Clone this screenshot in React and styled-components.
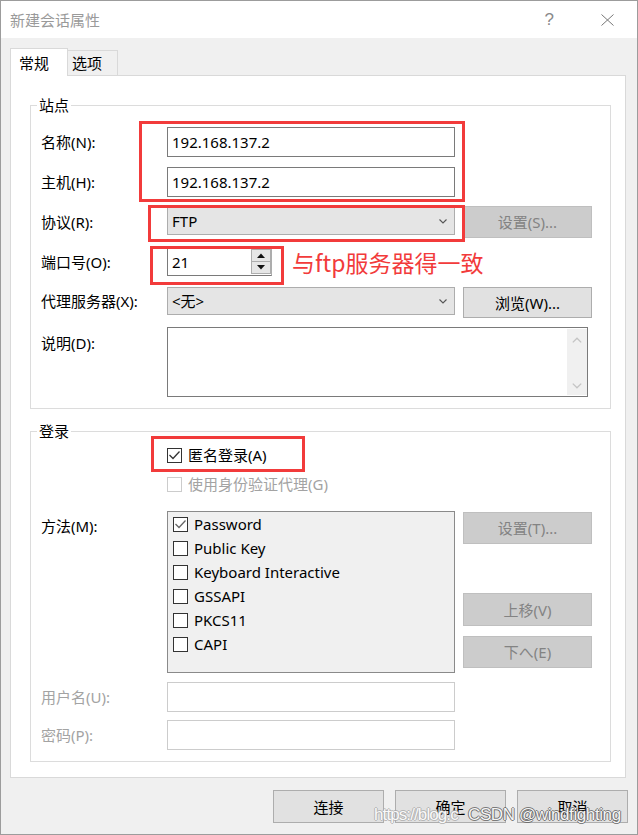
import React from 'react';
import styled, { createGlobalStyle } from 'styled-components';

const GlobalStyle = createGlobalStyle`
  html, body { margin: 0; padding: 0; background: #fff; }
  body {
    font-family: "Noto Sans", "Noto Sans CJK SC", sans-serif;
    font-size: 15px;
    line-height: 20px;
    color: #000;
  }
  * { box-sizing: border-box; }
`;

const Window = styled.div`
  position: relative;
  width: 638px;
  height: 835px;
  border: 1px solid #9c9c9c;
  background: #f0f0f0;
  display: flex;
  flex-direction: column;
  overflow: hidden;
`;

const TitleBar = styled.div`
  flex: none;
  height: 37px;
  background: #fff;
  display: flex;
  align-items: center;
  padding: 0 23px 0 9px;
`;

const TitleText = styled.div`
  flex: 1;
  color: #9a9a9a;
  font-size: 15px;
`;

const HelpMark = styled.span`
  color: #8a8a8a;
  font-family: "Liberation Sans", sans-serif;
  font-size: 17px;
  margin-right: 47px;
`;

const Body = styled.div`
  flex: 1;
  display: flex;
  flex-direction: column;
  padding: 10px 9px 0 9px;
`;

const TabRow = styled.div`
  display: flex;
  align-items: flex-end;
  height: 27px;
`;

const Tab = styled.div`
  position: relative;
  z-index: ${p => (p.$active ? 2 : 1)};
  height: ${p => (p.$active ? 28 : 25)}px;
  width: ${p => (p.$active ? 58 : 51)}px;
  margin-bottom: ${p => (p.$active ? -1 : 0)}px;
  margin-left: ${p => (p.$active ? 0 : -1)}px;
  padding-left: ${p => (p.$active ? 8 : 4)}px;
  border: 1px solid #d9d9d9;
  border-bottom: none;
  background: ${p => (p.$active ? '#fff' : '#f0f0f0')};
  display: flex;
  align-items: center;
`;

const Panel = styled.div`
  width: 616px;
  height: 703px;
  border: 1px solid #d9d9d9;
  background: #fff;
  padding: 29px 0 15px 19px;
  display: flex;
  flex-direction: column;
  gap: 22px;
`;

const Group = styled.div`
  position: relative;
  width: 581px;
  border: 1px solid #dcdcdc;
  padding: 0 18px 11px 10px;
  display: flex;
  flex-direction: column;
`;

const Legend = styled.div`
  align-self: flex-start;
  margin: -11px 0 0 -4px;
  padding: 0 2px;
  background: #fff;
  line-height: 20px;
`;

const Row = styled.div`
  display: grid;
  grid-template-columns: 118px 288px 129px;
  column-gap: 8px;
  height: ${p => p.$h}px;
  margin-top: ${p => p.$mt}px;
  align-items: ${p => p.$align || 'center'};
`;

const Label = styled.div`
  white-space: nowrap;
  color: ${p => (p.$disabled ? '#a3a3a3' : '#000')};
  padding-top: ${p => p.$pt || 0}px;
`;

const TextField = styled.input`
  width: 100%;
  height: ${p => p.$h}px;
  border: 1px solid ${p => (p.$disabled ? '#cccccc' : '#7a7a7a')};
  background: #fff;
  padding: 0 4px;
  margin: 0;
  font: inherit;
  color: #000;
  outline: none;
`;

const Select = styled.div`
  width: 100%;
  height: ${p => p.$h}px;
  margin-top: ${p => p.$mt || 0}px;
  border: 1px solid #adadad;
  background: #e5e5e5;
  display: flex;
  align-items: center;
  justify-content: space-between;
  padding: 0 7px 0 4px;
`;

const Button = styled.button`
  width: ${p => p.$w || 129}px;
  height: ${p => p.$h}px;
  margin: 0;
  padding: 0;
  font: inherit;
  line-height: 20px;
  border: 1px solid ${p => (p.$disabled ? '#bfbfbf' : '#adadad')};
  background: ${p => (p.$disabled ? '#cccccc' : '#e1e1e1')};
  color: ${p => (p.$disabled ? '#838383' : '#000')};
`;

const Span2 = styled.div`
  grid-column: 2 / 4;
  display: flex;
  align-items: center;
`;

const SpinBox = styled.div`
  width: 105px;
  height: 29px;
  border: 1px solid #7a7a7a;
  border-right-color: #adadad;
  background: #fff;
  display: flex;
`;

const SpinText = styled.div`
  flex: 1;
  padding-left: 4px;
  display: flex;
  align-items: center;
`;

const SpinButtons = styled.div`
  width: 20px;
  display: flex;
  flex-direction: column;
  padding: 1px 0;
`;

const SpinButton = styled.div`
  flex: 1;
  border: 1px solid #adadad;
  margin-top: ${p => (p.$down ? -1 : 0)}px;
  background: #e6e6e6;
  display: flex;
  align-items: center;
  justify-content: center;
`;

const Annotation = styled.div`
  margin-left: 20px;
  color: #f23b3b;
  font-family: "Noto Sans CJK SC", sans-serif;
  font-size: 23px;
  line-height: 26px;
  white-space: nowrap;
`;

const TextArea = styled.div`
  grid-column: 2 / 4;
  width: 421px;
  height: 70px;
  border: 1px solid #7a7a7a;
  background: #fff;
  display: flex;
  justify-content: flex-end;
  padding: 1px 0 1px 0;
`;

const ScrollTrack = styled.div`
  width: 20px;
  background: #f0f0f0;
  display: flex;
  flex-direction: column;
  justify-content: space-between;
  align-items: center;
  padding: 8px 0 6px;
`;

const RedBox = styled.div`
  position: absolute;
  left: ${p => p.$x}px;
  top: ${p => p.$y}px;
  width: ${p => p.$w}px;
  height: ${p => p.$hh}px;
  border: 3px solid #f23b3b;
  pointer-events: none;
`;

const CheckRow = styled.div`
  display: flex;
  align-items: center;
  gap: 6px;
  height: ${p => p.$h || 22}px;
  color: ${p => (p.$disabled ? '#a3a3a3' : '#000')};
  white-space: nowrap;
`;

const Box = styled.span`
  flex: none;
  width: 15px;
  height: 15px;
  border: 1px solid ${p => (p.$disabled ? '#cccccc' : '#333')};
  background: #fff;
  display: inline-flex;
  align-items: center;
  justify-content: center;
`;

const ListBox = styled.div`
  width: 288px;
  height: 162px;
  border: 1px solid #8a8a8a;
  background: #f0f0f0;
  padding: 0 0 0 5px;
  display: flex;
  flex-direction: column;
`;

const ButtonStack = styled.div`
  display: flex;
  flex-direction: column;
  padding-top: 1px;
`;

const Gap = styled.div`
  height: ${p => p.$h}px;
`;

const Footer = styled.div`
  display: flex;
  justify-content: flex-end;
  gap: 11px;
  margin-top: 12px;
`;

const Watermark = styled.div`
  position: absolute;
  left: 373px;
  top: 804px;
  display: flex;
  font-family: "Liberation Sans", sans-serif;
  font-size: 17px;
  line-height: 20px;
  white-space: nowrap;
  pointer-events: none;
`;

const WaterUrl = styled.span`
  width: 94px;
  letter-spacing: -0.9px;
  color: rgba(255, 255, 255, 0.95);
  text-shadow: 1px 0 rgba(170, 170, 170, 0.8), -1px 0 rgba(170, 170, 170, 0.8),
    0 1px rgba(170, 170, 170, 0.8), 0 -1px rgba(170, 170, 170, 0.8);
`;

const WaterName = styled.span`
  color: rgba(255, 255, 255, 0.95);
  letter-spacing: -0.4px;
  text-shadow: 1px 0 rgba(90, 90, 90, 0.75), -1px 0 rgba(90, 90, 90, 0.75),
    0 1px rgba(90, 90, 90, 0.75), 0 -1px rgba(90, 90, 90, 0.75);
`;

const Chevron = ({ up, color = '#555', w = 8, h = 5 }) => (
  <svg width={w} height={h} viewBox="0 0 8 5">
    <path
      d={up ? 'M0.5 4.5 L4 1 L7.5 4.5' : 'M0.5 0.5 L4 4 L7.5 0.5'}
      fill="none"
      stroke={color}
      strokeWidth="1.1"
    />
  </svg>
);

const Tri = ({ up }) => (
  <svg width="8" height="5" viewBox="0 0 8 5">
    <path d={up ? 'M0 5 L4 0.5 L8 5 Z' : 'M0 0 L4 4.5 L8 0 Z'} fill="#111" />
  </svg>
);

const Check = ({ color = '#333' }) => (
  <svg width="13" height="13" viewBox="0 0 13 13">
    <path d="M1.5 6 L5 9.5 L11.5 2.5" fill="none" stroke={color} strokeWidth="1.3" />
  </svg>
);

const CheckItem = ({ checked, disabled, children, h, color }) => (
  <CheckRow $disabled={disabled} $h={h}>
    <Box $disabled={disabled}>{checked && <Check color={color} />}</Box>
    <span>{children}</span>
  </CheckRow>
);

const methods = [
  { name: 'Password', checked: true },
  { name: 'Public Key' },
  { name: 'Keyboard Interactive' },
  { name: 'GSSAPI' },
  { name: 'PKCS11' },
  { name: 'CAPI' },
];

export default function App() {
  return (
    <>
      <GlobalStyle />
      <Window>
        <TitleBar>
          <TitleText>新建会话属性</TitleText>
          <HelpMark>?</HelpMark>
          <svg width="13" height="12" viewBox="0 0 13 12">
            <path d="M0.5 0.5 L12.5 11.5 M12.5 0.5 L0.5 11.5" stroke="#777" strokeWidth="1" fill="none" />
          </svg>
        </TitleBar>
        <Body>
          <TabRow>
            <Tab $active>常规</Tab>
            <Tab>选项</Tab>
          </TabRow>
          <Panel>
            <Group>
              <Legend>站点</Legend>
              <Row $h={30} $mt={12}>
                <Label>名称(N):</Label>
                <TextField $h={30} value="192.168.137.2" readOnly />
              </Row>
              <Row $h={30} $mt={10}>
                <Label>主机(H):</Label>
                <TextField $h={30} value="192.168.137.2" readOnly />
              </Row>
              <Row $h={32} $mt={9} $align="start">
                <Label $pt={6}>协议(R):</Label>
                <Select $h={28} $mt={1}>
                  <span>FTP</span>
                  <Chevron />
                </Select>
                <Button $h={32} $disabled>设置(S)...</Button>
              </Row>
              <Row $h={31} $mt={8}>
                <Label>端口号(O):</Label>
                <Span2>
                  <SpinBox>
                    <SpinText>21</SpinText>
                    <SpinButtons>
                      <SpinButton><Tri up /></SpinButton>
                      <SpinButton $down><Tri /></SpinButton>
                    </SpinButtons>
                  </SpinBox>
                  <Annotation>与ftp服务器得一致</Annotation>
                </Span2>
              </Row>
              <Row $h={31} $mt={10} $align="start">
                <Label $pt={4}>代理服务器(X):</Label>
                <Select $h={28}>
                  <span>&lt;无&gt;</span>
                  <Chevron />
                </Select>
                <Button $h={31}>浏览(W)...</Button>
              </Row>
              <Row $h={70} $mt={9} $align="start">
                <Label $pt={6}>说明(D):</Label>
                <TextArea>
                  <ScrollTrack>
                    <Chevron up color="#c4c4c4" w={10} h={6} />
                    <Chevron color="#c4c4c4" w={10} h={6} />
                  </ScrollTrack>
                </TextArea>
              </Row>
              <RedBox $x={108} $y={15} $w={326} $hh={81} />
              <RedBox $x={117} $y={99} $w={317} $hh={37} />
              <RedBox $x={119} $y={140} $w={134} $hh={39} />
            </Group>

            <Group>
              <Legend>登录</Legend>
              <Row $h={22} $mt={3}>
                <span />
                <CheckItem checked color="#333">匿名登录(A)</CheckItem>
              </Row>
              <Row $h={22} $mt={7}>
                <span />
                <CheckItem disabled>使用身份验证代理(G)</CheckItem>
              </Row>
              <Row $h={162} $mt={16} $align="start">
                <Label $pt={5}>方法(M):</Label>
                <ListBox>
                  {methods.map(m => (
                    <CheckItem key={m.name} checked={m.checked} h={24} color="#666">
                      {m.name}
                    </CheckItem>
                  ))}
                </ListBox>
                <ButtonStack>
                  <Button $h={32} $disabled>设置(T)...</Button>
                  <Gap $h={49} />
                  <Button $h={33} $disabled>上移(V)</Button>
                  <Gap $h={10} />
                  <Button $h={32} $disabled>下へ(E)</Button>
                </ButtonStack>
              </Row>
              <Row $h={30} $mt={9}>
                <Label $disabled>用户名(U):</Label>
                <TextField $h={30} $disabled readOnly value="" />
              </Row>
              <Row $h={30} $mt={8}>
                <Label $disabled>密码(P):</Label>
                <TextField $h={30} $disabled readOnly value="" />
              </Row>
              <RedBox $x={120} $y={4} $w={154} $hh={36} />
            </Group>
          </Panel>
          <Footer>
            <Button $w={111} $h={33}>连接</Button>
            <Button $w={111} $h={33}>确定</Button>
            <Button $w={111} $h={33}>取消</Button>
          </Footer>
        </Body>
        <Watermark>
          <WaterUrl>https://blog.c</WaterUrl>
          <WaterName>CSDN @windfighting</WaterName>
        </Watermark>
      </Window>
    </>
  );
}
